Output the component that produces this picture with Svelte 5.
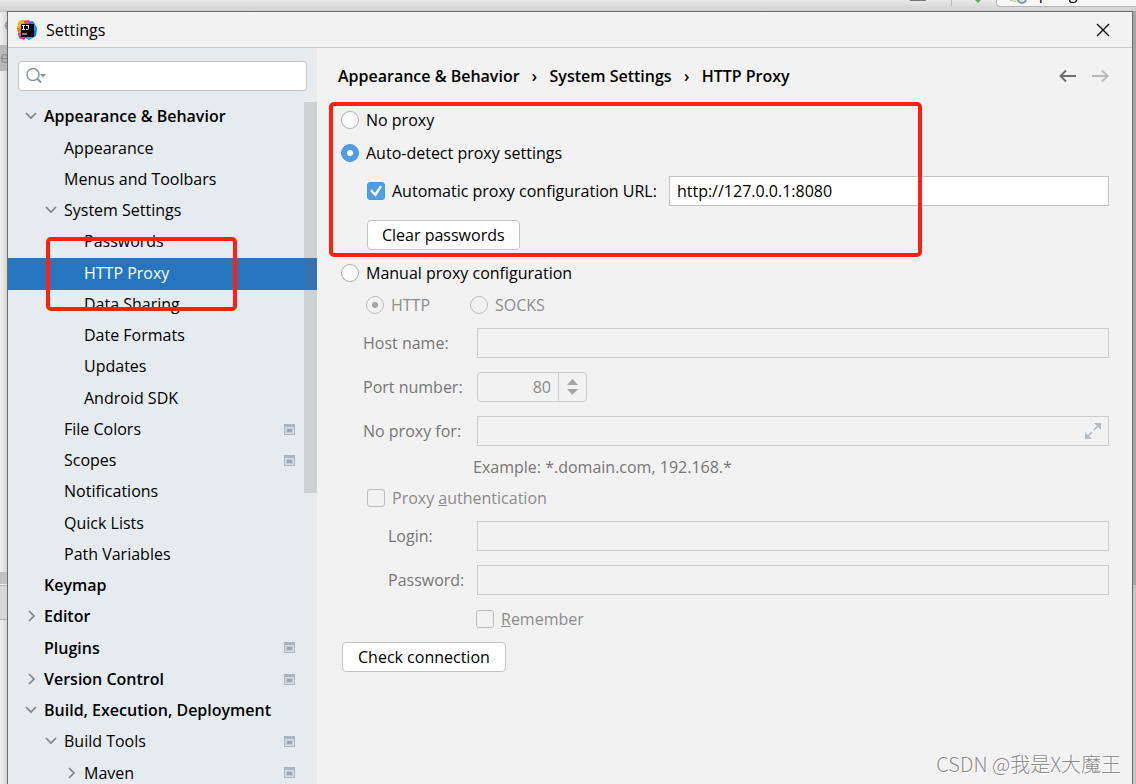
<script>
  const items = [
    { label: 'Appearance & Behavior', level: 0, arrow: 'down', bold: true },
    { label: 'Appearance', level: 1 },
    { label: 'Menus and Toolbars', level: 1 },
    { label: 'System Settings', level: 1, arrow: 'down' },
    { label: 'Passwords', level: 2 },
    { label: 'HTTP Proxy', level: 2, selected: true },
    { label: 'Data Sharing', level: 2 },
    { label: 'Date Formats', level: 2 },
    { label: 'Updates', level: 2 },
    { label: 'Android SDK', level: 2 },
    { label: 'File Colors', level: 1, project: true },
    { label: 'Scopes', level: 1, project: true },
    { label: 'Notifications', level: 1 },
    { label: 'Quick Lists', level: 1 },
    { label: 'Path Variables', level: 1 },
    { label: 'Keymap', level: 0, bold: true },
    { label: 'Editor', level: 0, arrow: 'right', bold: true },
    { label: 'Plugins', level: 0, bold: true, project: true },
    { label: 'Version Control', level: 0, arrow: 'right', bold: true, project: true },
    { label: 'Build, Execution, Deployment', level: 0, arrow: 'down', bold: true },
    { label: 'Build Tools', level: 1, arrow: 'down', project: true },
    { label: 'Maven', level: 2, arrow: 'right', project: true }
  ];
  let mode = $state('auto');
  let useUrl = $state(true);
  let url = $state('http://127.0.0.1:8080');
</script>

<div class="desktop">
  <div class="toolbar">
    <span class="minimize"></span>
    <span class="divider"></span>
    <svg class="hammer" width="8" height="3" viewBox="0 0 8 3"><path d="M1 0h6L4 3z" fill="#59a869" /></svg>
    <div class="runconfig">
      <svg width="18" height="5" viewBox="0 0 18 5">
        <path d="M0 0q4 2 8 1" fill="none" stroke="#a9d08e" />
        <circle cx="12" cy="-1" r="4" fill="#dfe5ea" stroke="#8796a5" stroke-width="2" />
      </svg>
      <span class="runname">spring</span>
    </div>
  </div>
  <div class="middle">
    <div class="left-edge"><span class="edge-c">e</span><span class="edge-tab">e</span><span class="edge-bar"></span><span class="edge-status"></span></div>
    <div class="dialog">
      <header class="titlebar">
        <svg class="logo" width="20" height="20" viewBox="0 0 20 20">
          <path d="M2 1l6-1 5 4-3 12-3 4-5-2 1-5-3-4z" fill="#fe2857" />
          <path d="M2 1l6-1 3 3-7 6-4-1z" fill="#fdb60d" />
          <path d="M7 1l5-1 3 4-7 3z" fill="#ff318c" />
          <path d="M0 9l5-2v9l-3-1z" fill="#f97a12" />
          <path d="M1 13l4-1 4 4-4 3-3-1z" fill="#ff2d92" />
          <path d="M12 2l4-1 4 7-1 8-7 4-5-3 6-4z" fill="#087cfa" />
          <path d="M14 1l3 2 3 6-4 3z" fill="#1b8dff" />
          <path d="M7 16h9l-4 4z" fill="#18b5ec" />
          <path d="M4 4h13v13H4z" />
          <path d="M5 5.500h3M6.500 5.500v4M5 9.500h3M9 5.500h2.500v3q0 1-1 1H9M5 14h5" fill="none" stroke="#fff" />
        </svg>
        <h1>Settings</h1>
        <button class="close" aria-label="Close">
          <svg width="14" height="14" viewBox="0 0 14 14"><path d="M1 1l12 12M13 1L1 13" stroke="#111" stroke-width="1.400" /></svg>
        </button>
      </header>
      <div class="content">
        <aside>
          <div class="search">
            <svg width="21" height="18" viewBox="0 0 21 18">
              <circle cx="7" cy="7.500" r="6" fill="none" stroke="#8a949d" stroke-width="1.500" />
              <path d="M11 11.500l4 4" stroke="#8a949d" stroke-width="2" />
              <path d="M14 7h6l-3 3.500z" fill="#8a949d" />
            </svg>
            <input type="text" aria-label="Search settings" />
          </div>
          <nav>
            <ul>
              {#each items as item}
                <li class:selected={item.selected} class:bold={item.bold} class="level{item.level}">
                  <a href="#settings">
                    <span class="arrow">
                      {#if item.arrow === 'down'}
                        <svg width="12" height="12" viewBox="0 0 12 12"><path d="M1 3l5 5 5-5" fill="none" stroke="#7f8488" stroke-width="1.700" /></svg>
                      {:else if item.arrow === 'right'}
                        <svg width="12" height="12" viewBox="0 0 12 12"><path d="M4 1l5 5-5 5" fill="none" stroke="#7f8488" stroke-width="1.700" /></svg>
                      {/if}
                    </span>
                    <span class="name">{item.label}</span>
                    {#if item.project}
                      <svg width="11" height="11" viewBox="0 0 11 11">
                        <path d="M0 0h11v11H0z" fill="#a9b4bd" />
                        <path d="M1 3h9v7H1z" fill="#d6dde3" />
                        <path d="M2 4h7v5H2z" fill="#c3ccd3" />
                        <path d="M3 5h5v3H3z" fill="#9aa7b1" />
                      </svg>
                    {/if}
                  </a>
                </li>
              {/each}
            </ul>
            <div class="thumb"></div>
          </nav>
          <div class="mark mark-nav"></div>
        </aside>
        <main>
          <div class="head">
            <div class="crumbs">
              <span>Appearance &amp; Behavior</span><i>›</i><span>System Settings</span><i>›</i><span>HTTP Proxy</span>
            </div>
            <button aria-label="Back">
              <svg width="17" height="14" viewBox="0 0 17 14"><path d="M7 1.500L1.500 7 7 12.500M2 7h15" fill="none" stroke="#6e6e6e" stroke-width="2" /></svg>
            </button>
            <button aria-label="Forward" disabled>
              <svg width="17" height="14" viewBox="0 0 17 14"><path d="M10 1.500L15.500 7 10 12.500M15 7H0" fill="none" stroke="#bababa" stroke-width="2" /></svg>
            </button>
          </div>
          <form>
            <label class="choice"><input type="radio" name="mode" value="none" bind:group={mode} />No proxy</label>
            <label class="choice"><input type="radio" name="mode" value="auto" bind:group={mode} />Auto-detect proxy settings</label>
            <div class="url">
              <label class="check"><input type="checkbox" bind:checked={useUrl} />Automatic proxy configuration URL:</label>
              <input class="field" type="text" aria-label="Configuration URL" bind:value={url} />
            </div>
            <button type="button" class="push clear">Clear passwords</button>
            <label class="choice manual"><input type="radio" name="mode" value="manual" bind:group={mode} />Manual proxy configuration</label>
            <div class="kinds">
              <label><input type="radio" name="kind" checked disabled />HTTP</label>
              <label><input type="radio" name="kind" disabled />SOCKS</label>
            </div>
            <div class="fields">
              <label for="host">Host name:</label>
              <input id="host" class="field" type="text" disabled />
              <label for="port">Port number:</label>
              <div class="spinner">
                <input id="port" type="text" value="80" disabled />
                <span><svg width="11" height="16" viewBox="0 0 11 16"><path d="M0 6l5.500-6L11 6zM0 10h11l-5.500 6z" fill="#a6a6a6" /></svg></span>
              </div>
              <label for="bypass">No proxy for:</label>
              <div class="expand field">
                <input id="bypass" type="text" disabled />
                <svg width="16" height="16" viewBox="0 0 16 16"><path d="M9 0h7v7zM0 9v7h7z" fill="#b4bcc2" /><path d="M9 7l4-4M7 9l-4 4" stroke="#b4bcc2" stroke-width="1.500" /></svg>
              </div>
            </div>
            <p>Example: *.domain.com, 192.168.*</p>
            <label class="check auth"><input type="checkbox" disabled /><span>Proxy <u>a</u>uthentication</span></label>
            <div class="fields login">
              <label for="login">Login:</label>
              <input id="login" class="field" type="text" disabled />
              <label for="password">Password:</label>
              <input id="password" class="field" type="password" disabled />
            </div>
            <label class="check remember"><input type="checkbox" disabled /><span><u>R</u>emember</span></label>
            <button type="button" class="push test">Check connection</button>
          </form>
          <div class="mark mark-form"></div>
        </main>
      </div>
    </div>
    <div class="right-edge"></div>
  </div>
  <div class="watermark">CSDN @我是X大魔王</div>
</div>

<style>
  * { box-sizing: border-box; }
  .desktop {
    position: relative;
    display: flex;
    flex-direction: column;
    height: 100vh;
    overflow: hidden;
    font: 16px/24px "Open Sans", "Noto Sans", sans-serif;
    color: #000;
    background: #efefef;
  }
  button, input { font: inherit; color: inherit; margin: 0; }
  .toolbar {
    display: flex;
    align-items: flex-start;
    justify-content: flex-end;
    height: 11px;
    flex: none;
    overflow: hidden;
    background: linear-gradient(#eaeaea, #cfcfcf);
  }
  .minimize { width: 16px; height: 1px; background: #777; margin-right: 25px; }
  .divider { width: 1px; height: 6px; background: #bbb; margin-right: 22px; }
  .hammer { margin-right: 14px; }
  .runconfig {
    display: flex;
    width: 140px;
    height: 7px;
    padding-left: 13px;
    border: 1px solid #b5b5b5;
    border-top: 0;
    border-radius: 0 0 0 4px;
    border-right: 0;
    background: #f7f7f7;
  }
  .runname { margin: -19px 0 0 3px; }
  .middle { display: flex; flex: 1; min-height: 0; }
  .left-edge {
    display: flex;
    flex-direction: column;
    width: 7px;
    flex: none;
    overflow: hidden;
    color: #8c8c8c;
    border-top: 1px solid #c4c4c4;
    background: linear-gradient(90deg, #f1f1f1, #d6d6d6);
  }
  .edge-c { height: 33px; padding-left: 4px; }
  .edge-tab { height: 26px; background: #b9b9b9; }
  .edge-bar { height: 13px; margin-top: 501px; background: #c2c2c2; border-bottom: 1px solid #eee; }
  .edge-status { height: 35px; background: #d8d8d8; border: solid #b5b5b5; border-width: 1px 0; }
  .right-edge { width: 3px; flex: none; background: linear-gradient(#a5a5a5 0 574px, #c4c4c4 574px); }
  .dialog {
    display: flex;
    flex-direction: column;
    flex: 1;
    min-width: 0;
    border: solid #6b6b6b;
    border-width: 1px 1px 0;
    background: #f2f2f2;
  }
  .titlebar {
    display: flex;
    align-items: center;
    flex: none;
    height: 36px;
    padding: 0 19px 0 9px;
    border-bottom: 1px solid #c9c9c9;
  }
  h1 { flex: 1; margin: 0 0 0 9px; font-size: 16px; font-weight: 400; }
  .close, .head button { display: flex; padding: 3px; border: 0; background: none; }
  .content { display: flex; flex: 1; min-height: 0; }
  aside { position: relative; width: 309px; flex: none; background: #e6ebef; overflow: hidden; }
  .search {
    display: flex;
    align-items: center;
    height: 30px;
    margin: 13px 10px 11px;
    padding-left: 7px;
    border: 1px solid #c4c4c4;
    border-radius: 4px;
    background: #fff;
  }
  .search input { flex: 1; min-width: 0; border: 0; outline: 0; background: none; }
  nav { position: relative; }
  ul { list-style: none; margin: 0; padding: 0; }
  li { height: 31px; }
  li:nth-child(4n + 2) { height: 32px; }
  a {
    display: flex;
    align-items: center;
    height: 100%;
    padding: 0 22px 3px 16px;
    color: inherit;
    text-decoration: none;
  }
  .level1 a { padding-left: 36px; }
  .level2 a { padding-left: 56px; }
  .arrow { display: flex; width: 20px; padding-left: 1px; }
  .name { flex: 1; white-space: nowrap; }
  .bold { font-weight: 600; }
  .selected { color: #fff; background: #2675bf; }
  .thumb {
    position: absolute;
    top: 0;
    right: 0;
    width: 13px;
    height: 391px;
    background: rgba(110, 110, 120, 0.2);
  }
  .mark { position: absolute; border: 4px solid #ff2010; border-radius: 5px; pointer-events: none; }
  .mark-nav { left: 38px; top: 189px; width: 191px; height: 74px; }
  .mark-form { left: 12px; top: 54px; width: 593px; height: 155px; }
  main { position: relative; flex: 1; min-width: 0; padding: 0 23px 0 24px; }
  .head { display: flex; align-items: center; height: 55px; gap: 14px; }
  .head button { padding: 3px 0 3px 2px; }
  .crumbs { display: flex; flex: 1; margin-left: -3px; font-weight: 600; white-space: nowrap; }
  i { width: 30px; text-align: center; font-style: normal; }
  form { display: flex; flex-direction: column; }
  label { white-space: nowrap; }
  .choice, .check, .kinds label { display: flex; align-items: center; gap: 7px; }
  .choice { height: 33px; }
  input[type='radio'], input[type='checkbox'] {
    display: grid;
    place-items: center;
    appearance: none;
    width: 18px;
    height: 18px;
    flex: none;
    border: 1px solid #b0b0b0;
    background: #fff;
  }
  input[type='radio'] { border-radius: 50%; }
  input[type='checkbox'] { border-radius: 3px; }
  input:checked:not(:disabled) { border-color: #4a97db; background: #4f9de4; }
  input[type='radio']:checked::before {
    content: '';
    width: 6px;
    height: 6px;
    border-radius: 50%;
    background: #fff;
  }
  input[type='checkbox']:checked::before {
    content: '';
    width: 12px;
    height: 12px;
    background: #fff;
    clip-path: polygon(0 50%, 16% 38%, 42% 66%, 82% 4%, 100% 14%, 46% 98%);
  }
  input[type='radio']:disabled, input[type='checkbox']:disabled { border-color: #bdbdbd; background: #f2f2f2; }
  input[type='radio']:disabled::before { background: #a6a6a6; }
  .url { display: flex; gap: 12px; margin: 7px 0 14px 26px; }
  .url .field { flex: 1; }
  .field {
    width: 100%;
    min-width: 0;
    height: 30px;
    padding: 0 7px;
    border: 1px solid #c4c4c4;
    border-radius: 0;
    outline: 0;
    background: #fff;
  }
  .field:disabled, .expand { background: #f2f2f2; border-color: #cdcdcd; }
  .push {
    align-self: flex-start;
    height: 30px;
    padding: 0 14px;
    border: 1px solid #c4c4c4;
    border-radius: 4px;
    background: #fff;
    white-space: nowrap;
  }
  .clear { margin-left: 26px; }
  .manual { margin-top: 6px; }
  .kinds { display: grid; grid-template-columns: 104px 1fr; height: 31px; margin-left: 25px; color: #8c8c8c; }
  .fields {
    display: grid;
    grid-template-columns: 114px 1fr;
    align-items: center;
    row-gap: 14px;
    margin: 8px 0 6px 22px;
    color: #777;
  }
  .spinner { display: flex; width: 110px; height: 30px; border: 1px solid #cdcdcd; border-radius: 4px; color: #8c8c8c; }
  .spinner input { flex: 1; min-width: 0; padding: 0 7px; border: 0; text-align: right; background: none; }
  .spinner span { display: grid; place-items: center; width: 28px; border-left: 1px solid #cdcdcd; }
  .expand { display: flex; align-items: center; }
  .expand input { flex: 1; min-width: 0; border: 0; background: none; }
  p { margin: 0 0 0 132px; line-height: 30px; color: #777; }
  .auth { height: 32px; margin-left: 26px; color: #8c8c8c; }
  .login { grid-template-columns: 89px 1fr; margin: 7px 0 8px 47px; }
  .remember { height: 32px; margin: 0 0 7px 135px; color: #8c8c8c; }
  .test { margin-left: 1px; padding: 0 15px; }
  .watermark {
    position: absolute;
    right: 15px;
    bottom: 5px;
    font: 300 20px/30px "Noto Sans CJK SC", sans-serif;
    color: #8e8e8e;
    text-shadow: 1px 1px 0 #fff;
    white-space: nowrap;
  }
</style>
